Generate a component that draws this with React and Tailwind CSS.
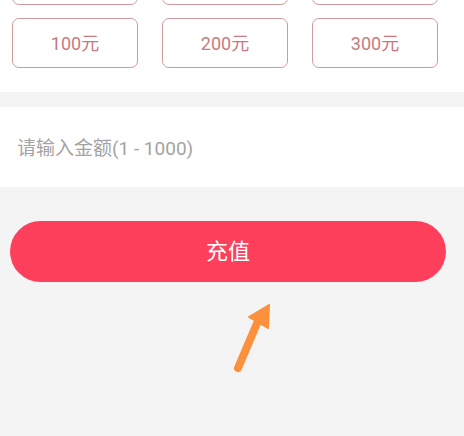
import React from 'react';

const amounts = [
  ['', '', ''],
  ['100元', '200元', '300元'],
];

const App = () => {
  return (
    <div
      className="relative w-[464px] h-[436px] overflow-hidden bg-[#f4f4f4]"
      style={{ fontFamily: 'Roboto, "Noto Sans CJK SC", sans-serif' }}
    >
      {/* Amount options (top row scrolled out of view) */}
      <div className="bg-white h-[92px] overflow-hidden">
        <div className="-mt-[45px] flex flex-col gap-[13px] pl-[12px]">
          {amounts.map((row, i) => (
            <div key={i} className="flex gap-[24px]">
              {row.map((a, j) => (
                <div
                  key={j}
                  className="w-[126px] h-[50px] rounded-[7px] border border-[#cf9a9c] flex items-center justify-center text-[18px] text-[#c97a80]"
                >
                  {a}
                </div>
              ))}
            </div>
          ))}
        </div>
      </div>

      {/* Custom amount input */}
      <div className="mt-[15px] bg-white h-[80px] flex items-center pt-[4px] px-[17px]">
        <input
          className="w-full bg-transparent outline-none text-[19px] text-[#333] placeholder:text-[#a3a3a3]"
          placeholder="请输入金额(1 - 1000)"
        />
      </div>

      {/* Submit */}
      <div className="pt-[34px] pl-[10px] pr-[18px]">
        <button className="w-full h-[61px] rounded-full bg-[#fd3f5c] text-white text-[22px] flex items-center justify-center">
          充值
        </button>
      </div>

      {/* Annotation arrow */}
      <svg className="absolute left-0 top-0" width="464" height="436" viewBox="0 0 464 436">
        <line x1="238" y1="368" x2="258" y2="321" stroke="#fb913c" strokeWidth="8" strokeLinecap="round" />
        <polygon points="269,305 249,317 268,328" fill="#fb913c" stroke="#fb913c" strokeWidth="2" strokeLinejoin="round" />
      </svg>
    </div>
  );
};

export default App;
